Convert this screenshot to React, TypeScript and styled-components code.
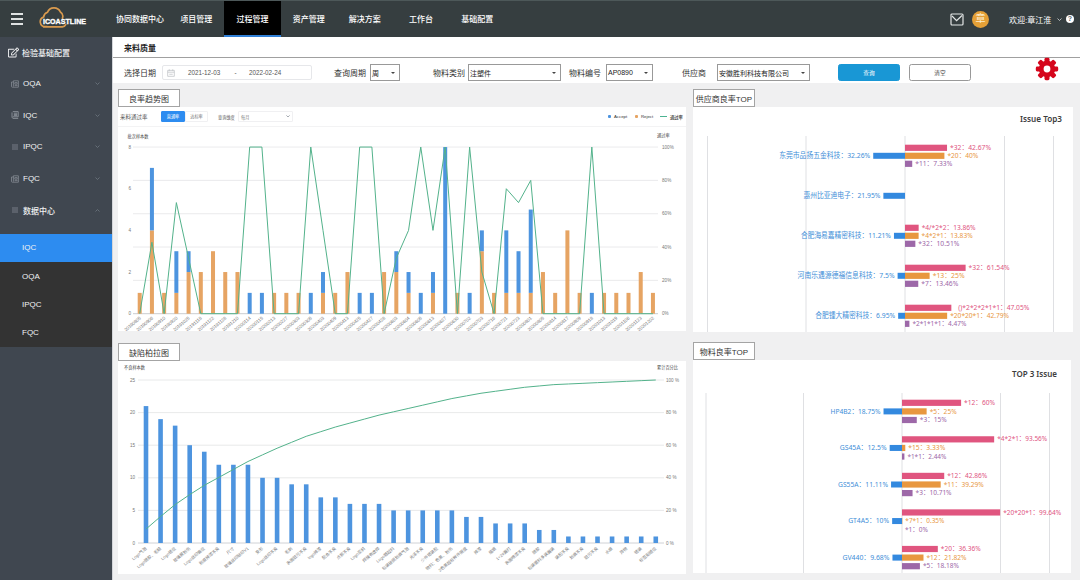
import React from "react";
import styled, { createGlobalStyle } from "styled-components";
import { FaRegEdit } from "react-icons/fa";

const latin = `"Liberation Sans", "Noto Sans CJK SC", sans-serif`;
const chartFont = `"Noto Sans", "Noto Sans CJK SC", sans-serif`;

const GlobalStyle = createGlobalStyle`
  * { box-sizing: border-box; }
  body { margin: 0; background: #f0f0f1; font-family: ${latin}; overflow: hidden; }
  svg { display: block; }
`;

const Page = styled.div`
  width: 1080px;
  height: 580px;
  display: flex;
  flex-direction: column;
  overflow: hidden;
`;

/* ---------- header ---------- */

const Header = styled.header`
  height: 37px;
  flex: none;
  display: flex;
  align-items: stretch;
  background: #363e40;
  border-top: 1px solid #4d5859;
  color: #fff;
`;

const Brand = styled.div`
  width: 112px;
  display: flex;
  align-items: center;
  padding-left: 11px;
  gap: 16px;
`;

const Burger = styled.div`
  width: 12px;
  height: 12px;
  display: flex;
  flex-direction: column;
  justify-content: space-between;
`;

const BurgerLine = styled.i`
  height: 2px;
  background: #dfe2e2;
`;

const NavItem = styled.a<{ $active?: boolean }>`
  width: 56.2px;
  display: flex;
  align-items: center;
  justify-content: center;
  font-size: 8px;
  font-weight: 500;
  white-space: nowrap;
  background: ${(p) => (p.$active ? "#000" : "transparent")};
  border-bottom: 2px solid ${(p) => (p.$active ? "#2f7fd6" : "transparent")};
`;

const UserArea = styled.div`
  margin-left: auto;
  display: flex;
  align-items: center;
  padding-right: 6px;
`;

const Avatar = styled.div`
  width: 17px;
  height: 17px;
  margin: 0 20px 0 8px;
  border-radius: 50%;
  background: #e5a037;
  font-size: 10px;
  line-height: 16px;
  text-align: center;
  color: #fbeccd;
`;

const Welcome = styled.span`
  font-size: 8px;
  width: 43px;
  margin-right: 5px;
  white-space: nowrap;
`;

const Help = styled.span`
  width: 8px;
  height: 8px;
  margin-left: 4px;
  border-radius: 50%;
  background: #fff;
  color: #59636a;
  font-size: 7px;
  font-weight: 700;
  line-height: 8px;
  text-align: center;
`;

/* ---------- sidebar ---------- */

const Body = styled.div`
  flex: 1;
  min-height: 0;
  display: flex;
`;

const Sidebar = styled.aside`
  width: 112px;
  flex: none;
  background: #404750;
  color: #f1f2f3;
`;

const MenuRow = styled.div<{ $root?: boolean }>`
  height: ${(p) => (p.$root ? 30.7 : 31.7)}px;
  display: flex;
  align-items: center;
  gap: ${(p) => (p.$root ? 3 : 4)}px;
  padding: 0 12px 0 ${(p) => (p.$root ? 8 : 11)}px;
  font-size: 8px;
  font-weight: 500;
`;

const MenuText = styled.span`
  flex: 1;
  white-space: nowrap;
`;

const SubMenu = styled.div`
  margin-top: 7.5px;
  background: #333;
`;

const SubItem = styled.div<{ $active?: boolean }>`
  height: 28.3px;
  padding-left: 22px;
  display: flex;
  align-items: center;
  font-size: 8px;
  background: ${(p) => (p.$active ? "#2d8cf0" : "transparent")};
`;

/* ---------- content ---------- */

const Content = styled.main`
  flex: 1;
  min-width: 0;
  display: flex;
  flex-direction: column;
  border-left: 1px solid #d4d6da;
`;

const TitleBar = styled.div`
  height: 21px;
  flex: none;
  padding-left: 11px;
  display: flex;
  align-items: center;
  background: #fff;
  border-bottom: 1px solid #a0a0a0;
  font-size: 8px;
  font-weight: 700;
  color: #222;
`;

const Filters = styled.div`
  height: 25px;
  flex: none;
  display: flex;
  align-items: center;
  padding: 4px 0 0 11px;
  background: #fff;
`;

const Label = styled.label<{ $gap?: number; $width: number }>`
  width: ${(p) => p.$width}px;
  margin-left: ${(p) => p.$gap ?? 0}px;
  flex: none;
  font-size: 8px;
  color: #333;
  white-space: nowrap;
`;

const DateRange = styled.div`
  width: 150px;
  height: 15px;
  flex: none;
  padding: 0 4px;
  display: flex;
  align-items: center;
  border: 1px solid #e6e7ea;
  border-radius: 2px;
  font-size: 6.3px;
  color: #555;
`;

const StartDate = styled.span`
  width: 34px;
  margin-left: 13px;
  white-space: nowrap;
`;

const EndDate = styled.span`
  width: 34px;
  white-space: nowrap;
`;

const Dash = styled.span`
  width: 27px;
  text-align: center;
`;

const SelectBox = styled.div<{ $width: number }>`
  width: ${(p) => p.$width}px;
  height: 16.5px;
  flex: none;
  padding: 0 4px 0 1px;
  display: flex;
  align-items: center;
  justify-content: space-between;
  border: 1px solid #999;
  background: #fff;
  font-size: 7px;
  color: #222;
  white-space: nowrap;
`;

const Caret = styled.i`
  border: 2px solid transparent;
  border-top: 2px solid #444;
  border-bottom: 0;
`;

const Button = styled.button<{ $primary?: boolean; $gap: number }>`
  width: 62px;
  height: 17.5px;
  margin: 0 0 0 ${(p) => p.$gap}px;
  padding: 0;
  flex: none;
  border: 1px solid ${(p) => (p.$primary ? "#1997d5" : "#999")};
  border-radius: 2.5px;
  background: ${(p) => (p.$primary ? "#1997d5" : "#fff")};
  color: ${(p) => (p.$primary ? "#fff" : "#444")};
  font-family: ${latin};
  font-size: 5.7px;
`;

const GearSlot = styled.div`
  margin: -7px 0 0 64px;
`;

const Dashboard = styled.div`
  flex: 1;
  display: flex;
  gap: 7px;
  padding: 6px 0 0 5px;
`;

const Column = styled.section<{ $width: number }>`
  width: ${(p) => p.$width}px;
  display: flex;
  flex-direction: column;
  align-items: flex-start;
`;

const Tab = styled.div<{ $gap?: number }>`
  width: 62px;
  height: 18px;
  margin-top: ${(p) => p.$gap ?? 0}px;
  flex: none;
  display: flex;
  align-items: center;
  justify-content: center;
  border: 1px solid #a4a4a4;
  background: #fff;
  font-size: 8px;
  color: #333;
  white-space: nowrap;
`;

const Card = styled.div<{ $width: number; $height: number }>`
  width: ${(p) => p.$width}px;
  height: ${(p) => p.$height}px;
  flex: none;
  background: #fff;
  overflow: hidden;
`;

const CardHead = styled.div`
  height: 20px;
  display: flex;
  align-items: center;
  padding: 0 3px 0 2px;
  border-bottom: 1px solid #f3f3f4;
  font-size: 5.5px;
  color: #555;
  white-space: nowrap;
`;

const CardTitle = styled.span`
  width: 41px;
`;

const Toggle = styled.span<{ $on?: boolean }>`
  width: ${(p) => (p.$on ? 24 : 23)}px;
  height: 11px;
  line-height: 9px;
  border: 1px solid ${(p) => (p.$on ? "#2d8cf0" : "#f0f0f2")};
  background: ${(p) => (p.$on ? "#2d8cf0" : "#fff")};
  color: ${(p) => (p.$on ? "#fff" : "#777")};
  border-radius: 1px;
  font-size: 4.2px;
  text-align: center;
`;

const MiniLabel = styled.span`
  margin-left: 10px;
  width: 20px;
  font-size: 4.2px;
`;

const MiniSelect = styled.span`
  width: 55px;
  height: 11px;
  display: flex;
  align-items: center;
  justify-content: space-between;
  padding: 0 2px;
  border: 1px solid #f0f0f2;
  border-radius: 1px;
  font-size: 4.2px;
  color: #777;
`;

const Legend = styled.div`
  margin-left: auto;
  display: flex;
  align-items: center;
  font-size: 4.3px;
  font-weight: 500;
  color: #333;
`;

const LegendName = styled.span<{ $width: number }>`
  width: ${(p) => p.$width}px;
`;

const Dot = styled.i<{ $color: string }>`
  width: 3px;
  height: 3px;
  margin: 0 3px 0 7px;
  border-radius: 1px;
  background: ${(p) => p.$color};
`;

const LineMark = styled.i`
  width: 7px;
  height: 1px;
  margin: 0 3px 0 6px;
  background: #4cb391;
`;

/* ---------- icons ---------- */

const Logo = () => (
  <svg width="50" height="26" viewBox="0 0 50 26">
    <path
      d="M8 20.7H6.2A5 5 0 0 1 4.6 11 6 6 0 0 1 8.5 6.3 7 7 0 0 1 21.4 6a5.2 5.2 0 0 1 2 6.2M4.5 20.8h18.8a4 4 0 0 0 3.4-2.2"
      fill="none"
      stroke="#d99a4e"
      strokeWidth="1.7"
      strokeLinecap="round"
    />
    <text x="4" y="17.8" fontFamily="Liberation Sans, sans-serif" fontWeight="700" fontSize="7.6" fill="#fff" stroke="#fff" strokeWidth=".35" textLength="43" lengthAdjust="spacingAndGlyphs">
      iCOASTLINE
    </text>
  </svg>
);

const Mail = () => (
  <svg width="14" height="13" viewBox="0 0 14 13" fill="none" stroke="#e4e7e7" strokeWidth="1.2">
    <rect x="1" y="1" width="12" height="11" rx="1" />
    <path d="M2 3 6.6 7.6 12 2.5" />
  </svg>
);

const Chevron = ({ up, color = "#6f7882", size = 5 }: { up?: boolean; color?: string; size?: number }) => (
  <svg width={size} height={size * 0.6} viewBox="0 0 10 6" fill="none" stroke={color} strokeWidth="1.6">
    <path d={up ? "M1 5 5 1 9 5" : "M1 1 5 5 9 1"} />
  </svg>
);

const RowIcon = ({ kind }: { kind: string }) => (
  <svg width="8" height="8" viewBox="0 0 8 8" fill="none" stroke="#858c94" strokeWidth=".8">
    {kind === "news" && <path d="M2.4 .8h5v6.4H1.2C.6 7.2.5 6.8.5 6.4V2h1.9zM2.4 2v4.6M3.8 2.6h2.4v1.6H3.8zM3.6 5.6h3" />}
    {kind === "book" && <path d="M1.8 .6h5.4v5.2H1.8a1 1 0 0 0 0 1.6h5.4M1 6.4V1.4M2.8 2.2h3.4M2.8 3.4h3.4M2.8 4.6h3.4" strokeWidth="1" />}
    {kind === "list" && <path d="M1 2h6M1 4h6M1 6h6" />}
  </svg>
);

const Calendar = () => (
  <svg width="8" height="8" viewBox="0 0 7 7" fill="none" stroke="#c3c5c9" strokeWidth=".7">
    <path d="M.6 1.2h5.8v5.2H.6zM.6 2.8h5.8M2 .3v1.5M5 .3v1.5M2 4.6h3" />
  </svg>
);

const Gear = () => (
  <svg width="24" height="24" viewBox="-12 -12 24 24" fill="#d5061c">
    {Array.from({ length: 8 }, (_, i) => (
      <rect key={i} x="-2.5" y="-11.2" width="5" height="7" rx="1.4" transform={`rotate(${i * 45})`} />
    ))}
    <circle r="8.2" />
    <circle r="3.4" fill="#fff" />
  </svg>
);

/* ---------- charts ---------- */

const BLUE = "#4d94df";
const ORANGE = "#e6a463";
const GREEN = "#53b28b";

// [accepted, rejected] lots per inspection date
const lots: [number, number][] = [
  [0, 1], [3, 4], [0, 1], [2, 1], [1, 2], [0, 2], [0, 3], [0, 2], [0, 2], [1, 0], [1, 0],
  [0, 1], [0, 1], [0, 1], [1, 0], [1, 1], [0, 1], [0, 2], [1, 0], [1, 0], [0, 2], [1, 2],
  [1, 1], [1, 0], [1, 1], [8, 0], [0, 1], [1, 0], [1, 3], [0, 1], [3, 1], [2, 1], [4, 1],
  [0, 2], [0, 1], [0, 4], [0, 1], [1, 0], [0, 1], [0, 1], [0, 1], [0, 2], [0, 1],
];

const dates = [
  "20190805", "20190906", "20190910", "20190920", "20191025", "20191118", "20191122", "20191128", "20191210",
  "20200114", "20200115", "20200213", "20200227", "20200303", "20200305", "20200403", "20200409", "20200413",
  "20200425", "20200427", "20200428", "20200603", "20200604", "20200605", "20200613", "20200627", "20200630",
  "20200702", "20200703", "20200716", "20200721", "20200723", "20200801", "20200805", "20200814", "20200817",
  "20200909", "20200918", "20201013", "20201019", "20201106", "20201123", "20201202",
];

const TrendChart = () => {
  const base = 186.7;
  const unit = 20.83;
  const x = (i: number) => 21.7 + i * 12.22;
  const line = lots.map(([a, r], i) => `${x(i)},${base - (a / (a + r)) * unit * 8}`).join(" ");
  return (
    <svg width="568" height="204" viewBox="0 0 568 204" fontFamily={latin} fontSize="4.6" fill="#777">
      <text x="9.5" y="11.2" fontSize="4.2" fill="#444">批次样本数</text>
      <text x="539" y="10" fontSize="4.2" fill="#444">通过率</text>
      {[0, 1, 2, 3, 4, 5].map((k) => (
        <g key={k}>
          <line x1="15" x2="540" y1={base - k * 33.33} y2={base - k * 33.33} stroke={k ? "#e4e5e7" : "#bcbfc4"} strokeWidth=".8" />
          <text x="544" y={base - k * 33.33 + 1.6}>{k * 20}%</text>
        </g>
      ))}
      {[0, 2, 4, 6, 8].map((v) => (
        <text key={v} x="13" y={base - v * unit + 1.6} textAnchor="end">{v}</text>
      ))}
      {lots.map(([a, r], i) => (
        <g key={i}>
          <rect x={x(i) - 2} width="4" y={base - r * unit} height={r * unit} fill={ORANGE} />
          <rect x={x(i) - 2} width="4" y={base - (a + r) * unit} height={a * unit} fill={BLUE} />
          <text transform={`translate(${x(i) + 1.5},${base + 5}) rotate(-40)`} textAnchor="end" textLength="20">{dates[i]}</text>
        </g>
      ))}
      <polyline points={line} fill="none" stroke={GREEN} strokeWidth="1" />
    </svg>
  );
};

const defects: [string, number][] = [
  ["Logo气泡", 21], ["Logo脱胶、毛糙", 19], ["Logo错位", 18], ["玻璃屏划伤", 15], ["Logo丝印偏位", 14], ["划痕掉漆不良", 12],
  ["尺寸", 12], ["玻璃丝印缺印V1", 12], ["变形", 10], ["Logo丝印不良", 10], ["毛刺", 9], ["表面脏污不良", 9],
  ["logo掉漆", 7], ["配合不良", 7], ["点胶不良", 6], ["Logo歪斜", 6], ["焊接有虚焊", 6], ["Logo翘起料", 5],
  ["包装破损划痕气泡", 5], ["光泽不良", 5], ["少件错装配", 5], ["物料：色差、划伤", 5], ["2色差超标样件限度", 4], ["掉漆", 4],
  ["缩痕", 3], ["1+2#漏打", 3], ["表面喷漆不良", 3], ["脱胶", 2], ["包装混料多装漏装", 2], ["装配不良", 1],
  ["划痕不良", 1], ["脏污不良", 1], ["水痕", 1], ["异物", 1], ["错装", 1], ["标签贴错位", 1],
];

const ParetoChart = () => {
  const base = 182;
  const x = (i: number) => 28 + i * 14.565;
  const total = defects.reduce((s, d) => s + d[1], 0);
  let sum = 0;
  const line = defects.map(([, n], i) => `${x(i)},${base - ((sum += n) / total) * 163}`).join(" ");
  return (
    <svg width="567" height="213" viewBox="0 0 567 213" fontFamily={latin} fontSize="4.6" fill="#777">
      <text x="6" y="8" fontSize="4.2" fill="#444">不良样本数</text>
      <text x="539" y="8" fontSize="4.2" fill="#444">累计百分比</text>
      {[0, 1, 2, 3, 4, 5].map((k) => (
        <g key={k}>
          <line x1="20" x2="546" y1={base - k * 32.6} y2={base - k * 32.6} stroke={k ? "#e2e3e5" : "#c4c7cb"} strokeWidth=".8" />
          <text x="17" y={base - k * 32.6 + 1.6} textAnchor="end">{k * 5}</text>
          <text x="548" y={base - k * 32.6 + 1.6}>{k * 20} %</text>
        </g>
      ))}
      {defects.map(([name, n], i) => (
        <g key={i}>
          <rect x={x(i) - 2.3} width="4.6" y={base - n * 6.52} height={n * 6.52} fill={BLUE} />
          <text transform={`translate(${x(i) + 1},${base + 6}) rotate(-40)`} textAnchor="end" fontSize="4.2">{name}</text>
        </g>
      ))}
      <polyline points={line} fill="none" stroke={GREEN} strokeWidth="1" />
    </svg>
  );
};

type Issue = { label: string; value: number; indent?: number; width: number };
type TopRow = { name: string; rate: number; width: number; issues: Issue[] };

const suppliers: TopRow[] = [
  { name: "东莞市品扬五金科技", rate: 32.26, width: 91, issues: [{ label: "*32", value: 42.67, width: 41 }, { label: "*20", value: 40, width: 31 }, { label: "*11", value: 7.33, width: 37 }] },
  { name: "惠州比亚迪电子", rate: 21.95, width: 77, issues: [] },
  { name: "合肥海易嘉精密科技", rate: 11.21, width: 90, issues: [{ label: "*4/*2*2", value: 13.86, width: 54 }, { label: "*4*2*1", value: 13.83, width: 51 }, { label: "*32", value: 10.51, width: 41 }] },
  { name: "河南乐遇源德福信息科技", rate: 7.5, width: 97, issues: [{ label: "*32", value: 61.54, width: 41 }, { label: "*13", value: 25, width: 32 }, { label: "*7", value: 13.46, width: 37 }] },
  { name: "合肥锺大精密科技", rate: 6.95, width: 80, issues: [{ label: "()*2*2*2*1*1", value: 47.05, indent: 4, width: 71 }, { label: "*20*20*1", value: 42.79, width: 59 }, { label: "*2*1*1*1", value: 4.47, width: 54 }] },
];

const materials: TopRow[] = [
  { name: "HP4B2", rate: 18.75, width: 50, issues: [{ label: "*12", value: 60, width: 31 }, { label: "*5", value: 25, width: 27 }, { label: "*3", value: 15, width: 27 }] },
  { name: "GS45A", rate: 12.5, width: 47, issues: [{ label: "*4*2*1", value: 93.56, width: 50 }, { label: "*15", value: 3.33, width: 37 }, { label: "*1*1", value: 2.44, width: 39 }] },
  { name: "GS55A", rate: 11.11, width: 50, issues: [{ label: "*12", value: 42.86, width: 40 }, { label: "*11", value: 39.29, width: 40 }, { label: "*3", value: 10.71, width: 36 }] },
  { name: "GT4A5", rate: 10, width: 41, issues: [{ label: "*20*20*1", value: 99.64, width: 58 }, { label: "*7*1", value: 0.35, width: 39 }, { label: "*1", value: 0, width: 23 }] },
  { name: "GV440", rate: 9.68, width: 47, issues: [{ label: "*20", value: 36.36, width: 40 }, { label: "*12", value: 21.82, width: 40 }, { label: "*5", value: 18.18, width: 36 }] },
];

const issueColors = ["#e0557f", "#e8973f", "#9d68a8"];

interface TopChartProps {
  title: string;
  titleX: number;
  titleY: number;
  titleWidth: number;
  rows: TopRow[];
  width: number;
  height: number;
  center: number;
  ticks: number[];
  top: number;
  first: number;
  step: number;
  pitch: number;
}

const TopChart = (p: TopChartProps) => (
  <svg width={p.width} height={p.height} viewBox={`0 0 ${p.width} ${p.height}`} fontFamily={chartFont} fontSize="7.6">
    <text x={p.titleX} y={p.titleY} textAnchor="end" fontSize="8.8" fontWeight="600" fill="#3d3d3d" textLength={p.titleWidth} lengthAdjust="spacingAndGlyphs">
      {p.title}
    </text>
    {p.ticks.map((t) => (
      <line key={t} x1={t} x2={t} y1={p.top} y2={p.height} stroke="#dfe0e3" strokeWidth="1" />
    ))}
    {p.rows.map((row, i) => {
      const y = p.first + i * p.step;
      const w = row.rate * 0.985;
      return (
        <g key={row.name}>
          <rect x={p.center - w} y={y - 3} width={w} height="6" fill="#3389df" />
          <text x={p.center - w - 3} y={y + 2.1} textAnchor="end" fill="#3e8ed8" textLength={row.width} lengthAdjust="spacingAndGlyphs">
            {`${row.name}：${row.rate}%`}
          </text>
          {row.issues.map((s, k) => {
            const cy = y + (k - 1) * p.pitch;
            const bw = s.value * 0.985;
            return (
              <g key={k} fill={issueColors[k]}>
                <rect x={p.center} y={cy - 3.1} width={bw} height="6.2" />
                <text x={p.center + bw + 3 + (s.indent ?? 0)} y={cy + 2.1} textLength={s.width} lengthAdjust="spacingAndGlyphs">
                  {`${s.label}：${s.value}%`}
                </text>
              </g>
            );
          })}
        </g>
      );
    })}
  </svg>
);

/* ---------- page ---------- */

const Select = ({ value, width }: { value: string; width: number }) => (
  <SelectBox $width={width}>
    <span>{value}</span>
    <Caret />
  </SelectBox>
);

const navItems = ["协同数据中心", "项目管理", "过程管理", "资产管理", "解决方案", "工作台", "基础配置"];
const menu = [
  { text: "OQA", icon: "news" },
  { text: "IQC", icon: "book" },
  { text: "IPQC", icon: "list" },
  { text: "FQC", icon: "news" },
  { text: "数据中心", icon: "list", open: true },
];

export default function App() {
  return (
    <Page>
      <GlobalStyle />
      <Header>
        <Brand>
          <Burger>
            <BurgerLine />
            <BurgerLine />
            <BurgerLine />
          </Burger>
          <Logo />
        </Brand>
        {navItems.map((n) => (
          <NavItem key={n} $active={n === "过程管理"}>{n}</NavItem>
        ))}
        <UserArea>
          <Mail />
          <Avatar>章</Avatar>
          <Welcome>欢迎:章江淮</Welcome>
          <Chevron color="#d5d9d9" />
          <Help>?</Help>
        </UserArea>
      </Header>
      <Body>
        <Sidebar>
          <MenuRow $root>
            <FaRegEdit size={11} />
            <MenuText>检验基础配置</MenuText>
          </MenuRow>
          {menu.map((m) => (
            <MenuRow key={m.text}>
              <RowIcon kind={m.icon} />
              <MenuText>{m.text}</MenuText>
              <Chevron up={m.open} />
            </MenuRow>
          ))}
          <SubMenu>
            {["IQC", "OQA", "IPQC", "FQC"].map((s, i) => (
              <SubItem key={s} $active={i === 0}>{s}</SubItem>
            ))}
          </SubMenu>
        </Sidebar>
        <Content>
          <TitleBar>来料质量</TitleBar>
          <Filters>
            <Label $width={38}>选择日期</Label>
            <DateRange>
              <Calendar />
              <StartDate>2021-12-03</StartDate>
              <Dash>-</Dash>
              <EndDate>2022-02-24</EndDate>
            </DateRange>
            <Label $gap={22} $width={36}>查询周期</Label>
            <Select value="周" width={30} />
            <Label $gap={33} $width={35}>物料类别</Label>
            <Select value="注塑件" width={93} />
            <Label $gap={8} $width={37}>物料编号</Label>
            <Select value="AP0890" width={47} />
            <Label $gap={29} $width={35}>供应商</Label>
            <Select value="安徽胜利科技有限公司" width={93} />
            <Button $primary $gap={28}>查询</Button>
            <Button $gap={9}>清空</Button>
            <GearSlot>
              <Gear />
            </GearSlot>
          </Filters>
          <Dashboard>
            <Column $width={568}>
              <Tab>良率趋势图</Tab>
              <Card $width={568} $height={224}>
                <CardHead>
                  <CardTitle>来料通过率</CardTitle>
                  <Toggle $on>直通率</Toggle>
                  <Toggle>达标率</Toggle>
                  <MiniLabel>查询维度</MiniLabel>
                  <MiniSelect>
                    每月
                    <Chevron size={4} />
                  </MiniSelect>
                  <Legend>
                    <Dot $color={BLUE} />
                    <LegendName $width={14}>Accept</LegendName>
                    <Dot $color={ORANGE} />
                    <LegendName $width={13}>Reject</LegendName>
                    <LineMark />
                    <LegendName $width={13}>通过率</LegendName>
                  </Legend>
                </CardHead>
                <TrendChart />
              </Card>
              <Tab $gap={12}>缺陷柏拉图</Tab>
              <Card $width={568} $height={213}>
                <ParetoChart />
              </Card>
            </Column>
            <Column $width={380}>
              <Tab>供应商良率TOP</Tab>
              <Card $width={380} $height={225}>
                <TopChart title="Issue Top3" titleX={369} titleY={14.5} titleWidth={42} rows={suppliers} width={380} height={225} center={212} ticks={[14.5, 113, 212, 311.5, 360.5]} top={29} first={48.8} step={40} pitch={8} />
              </Card>
              <Tab $gap={10}>物料良率TOP</Tab>
              <Card $width={378} $height={213}>
                <TopChart title="TOP 3 Issue" titleX={364} titleY={17} titleWidth={45} rows={materials} width={378} height={213} center={209} ticks={[13, 110.5, 209, 307.5, 356.5]} top={33} first={51.4} step={36.55} pitch={8.6} />
              </Card>
            </Column>
          </Dashboard>
        </Content>
      </Body>
    </Page>
  );
}
